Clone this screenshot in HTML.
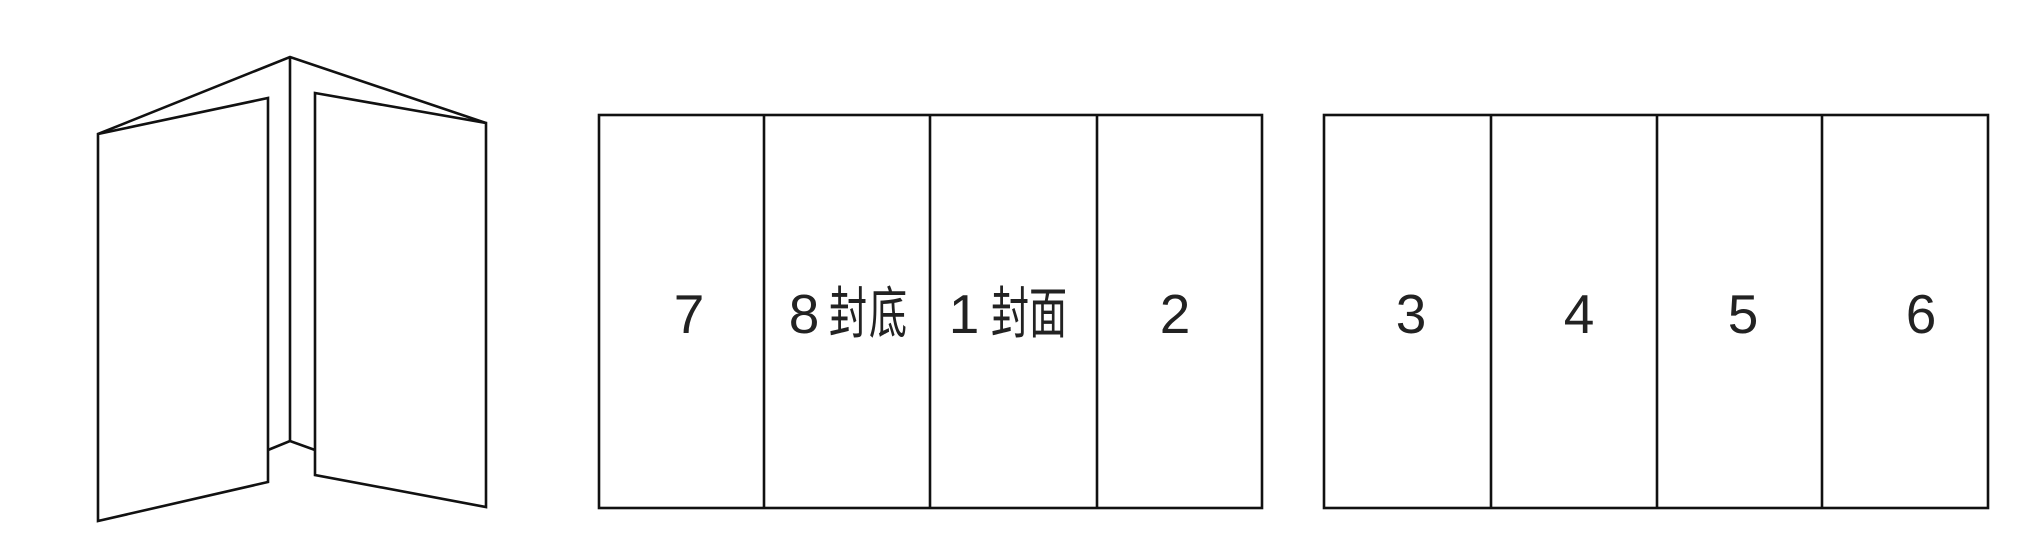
<!DOCTYPE html>
<html><head><meta charset="utf-8"><style>
html,body{margin:0;padding:0;background:#fff;}
svg{display:block;}
text{font-family:"Liberation Sans","Noto Sans CJK SC",sans-serif;font-size:55px;fill:#222;}
text.c{font-size:56px;}
</style></head><body>
<svg width="2036" height="546" viewBox="0 0 2036 546" xmlns="http://www.w3.org/2000/svg">
<g fill="none" stroke="#111" stroke-width="2.6" stroke-linejoin="miter">
  <polyline points="98,134 290,57 486,123"/>
  <line x1="290" y1="57" x2="290" y2="441"/>
  <polyline points="268,450 290,441 315,450"/>
  <polygon points="98,134 268,98 268,482 98,521"/>
  <polygon points="315,93 486,123 486,507 315,475"/>
  <rect x="599" y="115" width="663" height="393"/>
  <line x1="764" y1="115" x2="764" y2="508"/>
  <line x1="930" y1="115" x2="930" y2="508"/>
  <line x1="1097" y1="115" x2="1097" y2="508"/>
  <rect x="1324" y="115" width="664" height="393"/>
  <line x1="1491" y1="115" x2="1491" y2="508"/>
  <line x1="1657" y1="115" x2="1657" y2="508"/>
  <line x1="1822" y1="115" x2="1822" y2="508"/>
</g>
<g text-anchor="middle">
  <text x="689" y="333">7</text>
  <text x="804" y="333">8</text>
  <text class="c" transform="translate(848,333) scale(0.68,1)">封</text>
  <text class="c" transform="translate(888,333) scale(0.68,1)">底</text>
  <text x="964" y="333">1</text>
  <text class="c" transform="translate(1010,333) scale(0.68,1)">封</text>
  <text class="c" transform="translate(1048,333) scale(0.68,1)">面</text>
  <text x="1175" y="333">2</text>
  <text x="1411" y="333">3</text>
  <text x="1579" y="333">4</text>
  <text x="1743" y="333">5</text>
  <text x="1921" y="333">6</text>
</g>
</svg>
</body></html>
